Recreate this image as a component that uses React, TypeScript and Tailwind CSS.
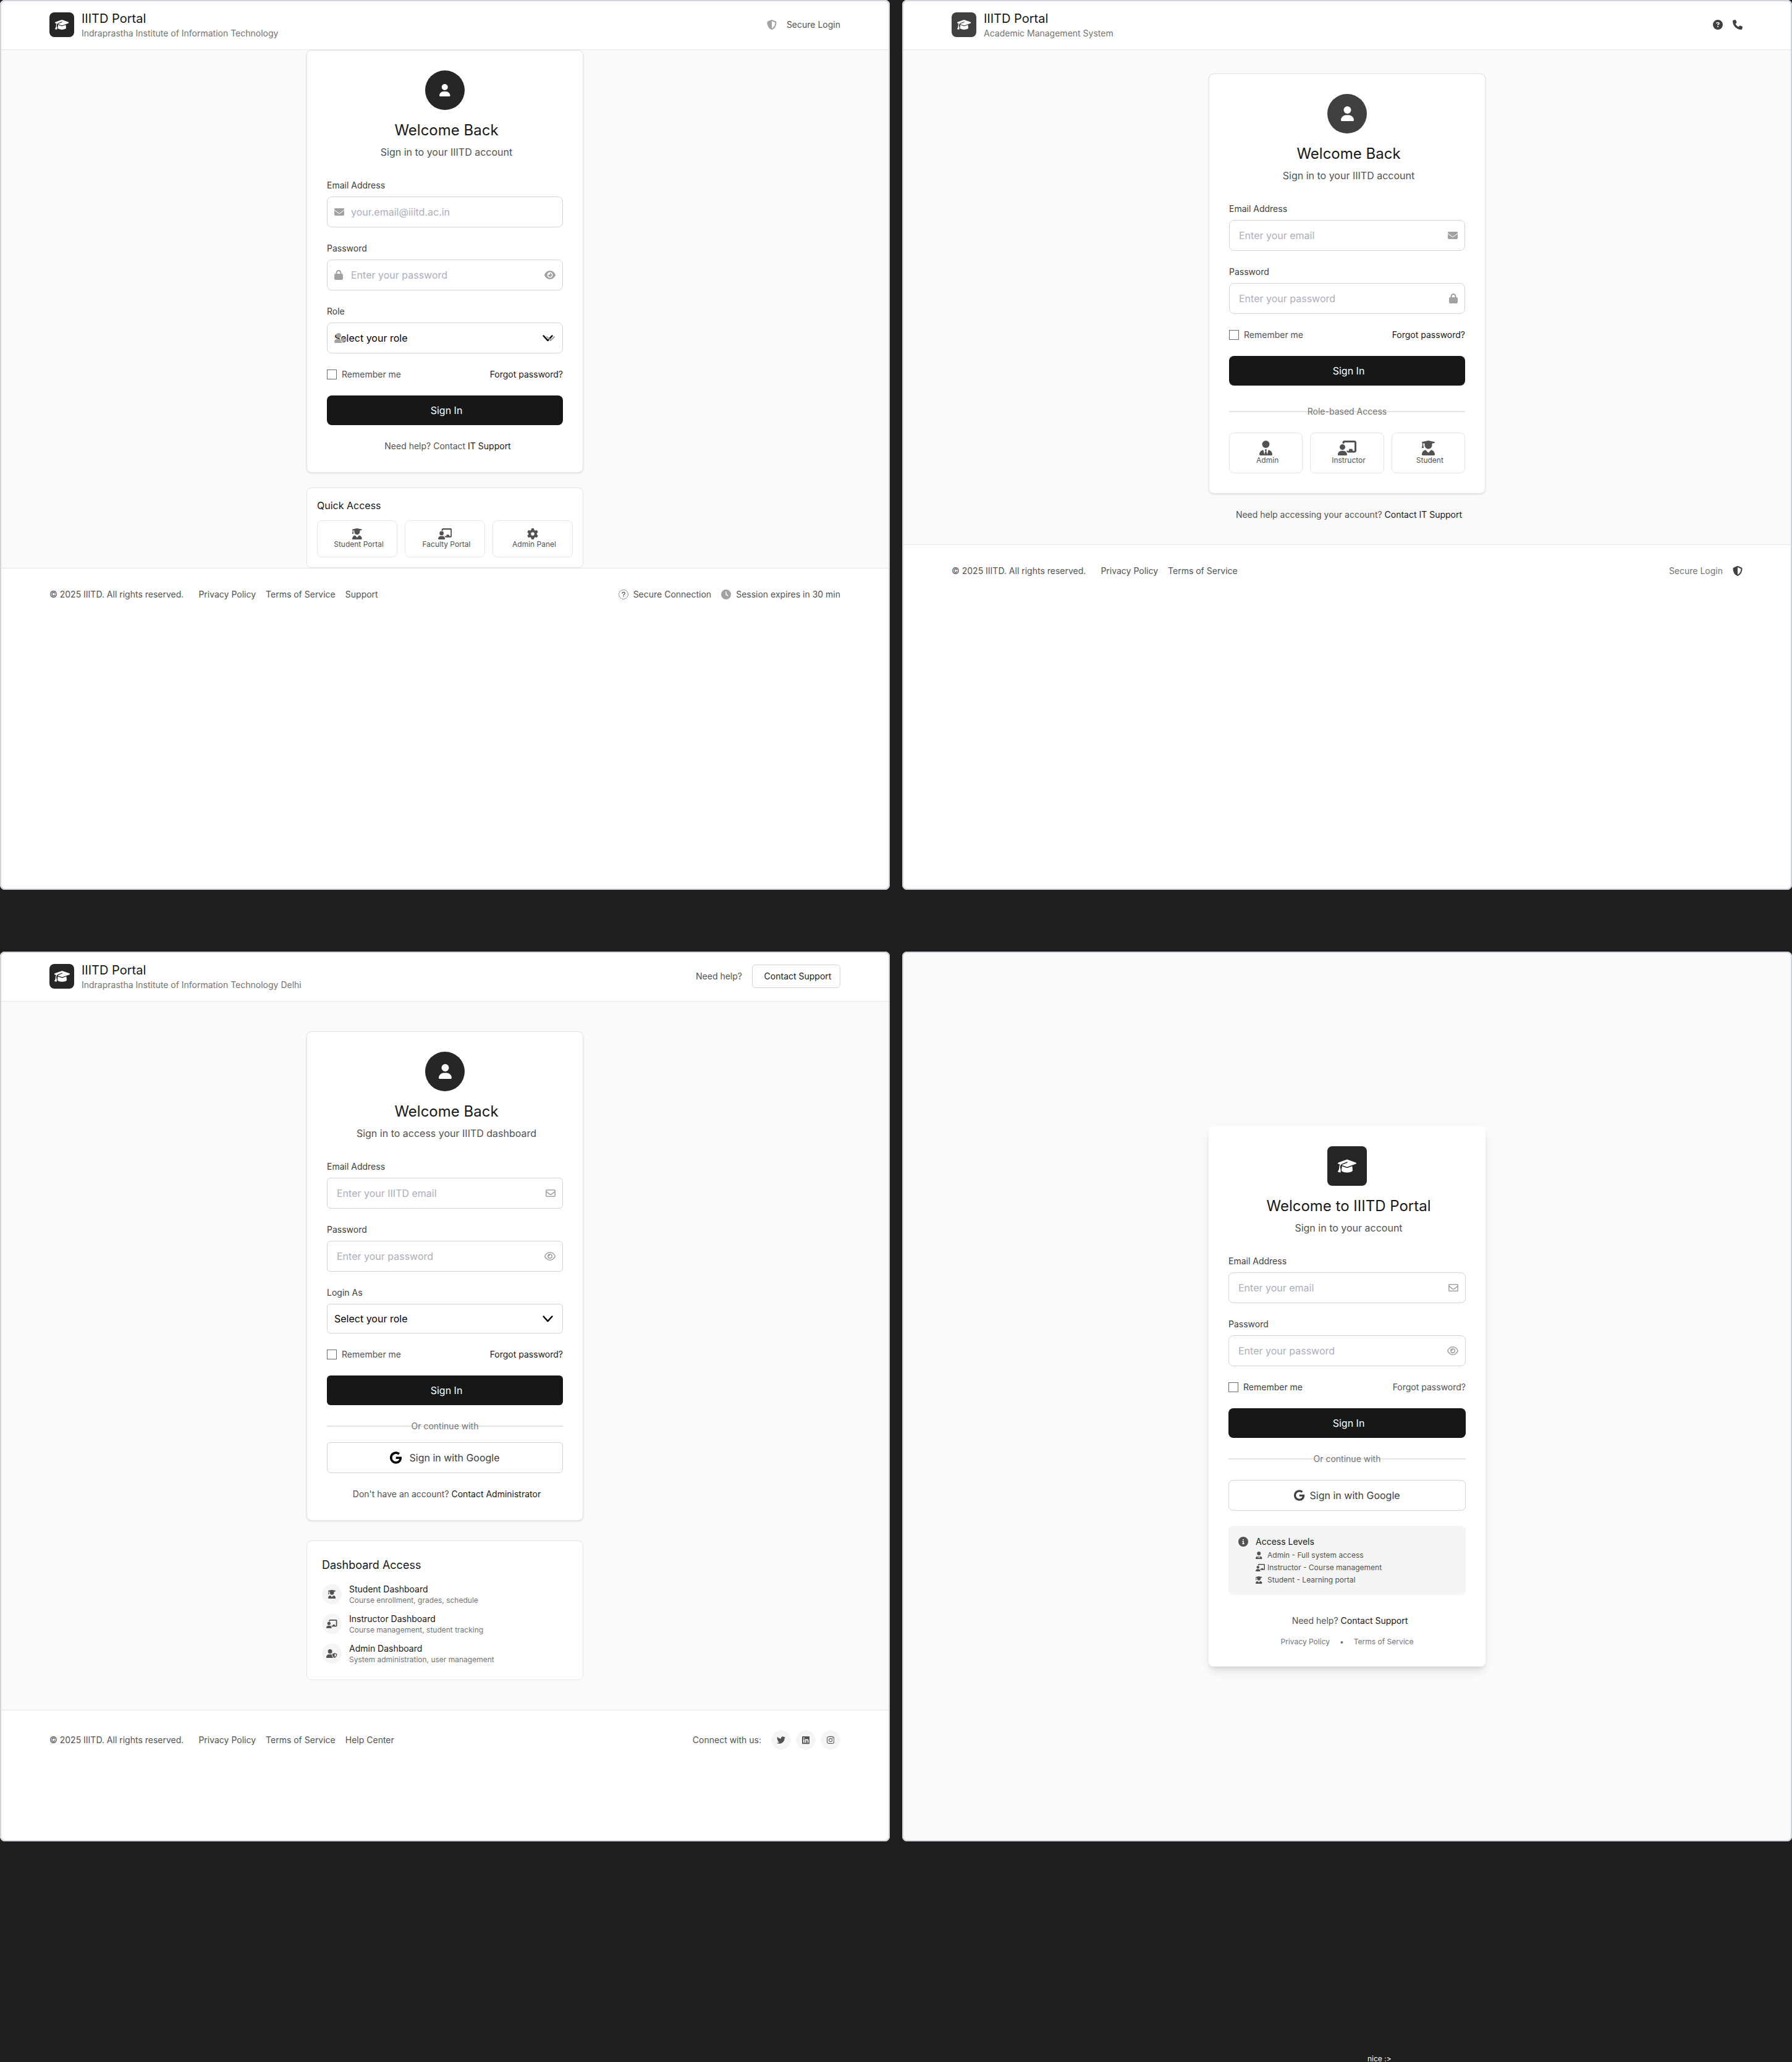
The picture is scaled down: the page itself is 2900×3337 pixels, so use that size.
import type { ReactNode } from "react";
import type { IconType } from "react-icons";
import {
  FaChalkboardUser,
  FaChevronDown,
  FaCircleInfo,
  FaCircleQuestion,
  FaClock,
  FaEnvelope,
  FaEye,
  FaGear,
  FaGoogle,
  FaGraduationCap,
  FaInstagram,
  FaLinkedin,
  FaLock,
  FaPhone,
  FaRegEnvelope,
  FaRegEye,
  FaShieldHalved,
  FaTwitter,
  FaUser,
  FaUserGraduate,
  FaUserShield,
  FaUserTie,
} from "react-icons/fa6";

// Each glyph keeps the proportions of its own drawing box; callers set only the height.
const glyphs = {
  board: [FaChalkboardUser, "aspect-[5/4]"],
  chevron: [FaChevronDown, "aspect-square"],
  clock: [FaClock, "aspect-square"],
  envelope: [FaEnvelope, "aspect-square"],
  envelopeOutline: [FaRegEnvelope, "aspect-square"],
  eye: [FaEye, "aspect-[9/8]"],
  eyeOutline: [FaRegEye, "aspect-[9/8]"],
  gear: [FaGear, "aspect-square"],
  google: [FaGoogle, "aspect-[61/64]"],
  cap: [FaGraduationCap, "aspect-[5/4]"],
  info: [FaCircleInfo, "aspect-square"],
  instagram: [FaInstagram, "aspect-[7/8]"],
  linkedin: [FaLinkedin, "aspect-[7/8]"],
  lock: [FaLock, "aspect-[7/8]"],
  phone: [FaPhone, "aspect-square"],
  question: [FaCircleQuestion, "aspect-square"],
  shield: [FaShieldHalved, "aspect-square"],
  twitter: [FaTwitter, "aspect-square"],
  user: [FaUser, "aspect-[7/8]"],
  graduate: [FaUserGraduate, "aspect-[7/8]"],
  userShield: [FaUserShield, "aspect-[5/4]"],
  tie: [FaUserTie, "aspect-[7/8]"],
} satisfies Record<string, [IconType, string]>;

type GlyphName = keyof typeof glyphs;

function Glyph({ name, className = "h-4" }: { name: GlyphName; className?: string }) {
  const [Icon, aspect] = glyphs[name];
  return <Icon className={`w-auto shrink-0 ${aspect} ${className}`} />;
}

function Frame({ tone, children }: { tone: string; children: ReactNode }) {
  return (
    <section
      className={`flex h-[1440px] w-[1440px] flex-col overflow-hidden rounded-lg outline-2 -outline-offset-2 outline-[#ced4da] ${tone}`}
    >
      {children}
    </section>
  );
}

function Header({
  subtitle,
  logoTone,
  iconSize,
  children,
}: {
  subtitle: string;
  logoTone: string;
  iconSize: string;
  children: ReactNode;
}) {
  return (
    <header className="flex h-[81px] shrink-0 items-center justify-between border-b border-neutral-200 bg-white px-20">
      <div className="flex items-center gap-3">
        <div className={`flex size-10 items-center justify-center rounded-lg text-white ${logoTone}`}>
          <Glyph name="cap" className={iconSize} />
        </div>
        <div>
          <div className="text-xl leading-7 text-neutral-900">IIITD Portal</div>
          <div className="text-sm leading-5 text-neutral-500">{subtitle}</div>
        </div>
      </div>
      {children}
    </header>
  );
}

function FooterLinks({ last }: { last?: string }) {
  return (
    <div className="flex items-center gap-6">
      <span>© 2025 IIITD. All rights reserved.</span>
      <div className="flex gap-4">
        <span>Privacy Policy</span>
        <span>Terms of Service</span>
        {last && <span>{last}</span>}
      </div>
    </div>
  );
}

function Footer({ last, children }: { last?: string; children: ReactNode }) {
  return (
    <footer className="flex shrink-0 items-center justify-between border-t border-neutral-200 bg-white px-20 py-8 text-sm leading-5 text-neutral-600">
      <FooterLinks last={last} />
      {children}
    </footer>
  );
}

function Intro({ title, subtitle, badge }: { title: string; subtitle: string; badge: ReactNode }) {
  return (
    <div className="flex flex-col items-center">
      {badge}
      <h1 className="mt-[17px] pl-[5px] text-2xl leading-8 text-neutral-900">{title}</h1>
      <p className="mt-[7px] pl-[5px] text-base leading-6 text-neutral-600">{subtitle}</p>
    </div>
  );
}

function Badge({ tone, children }: { tone: string; children: ReactNode }) {
  return <div className={`flex size-16 items-center justify-center text-white ${tone}`}>{children}</div>;
}

function Field({
  label,
  placeholder,
  left,
  right,
  radius = "rounded-lg",
}: {
  label: string;
  placeholder: string;
  left?: GlyphName;
  right?: GlyphName;
  radius?: string;
}) {
  return (
    <div>
      <div className="text-sm leading-5 text-neutral-700">{label}</div>
      <div
        className={`mt-2 flex h-[50px] items-center border border-neutral-300 bg-white px-[11px] text-neutral-400 ${radius}`}
      >
        {left && (
          <span className="flex w-[27px] shrink-0">
            <Glyph name={left} />
          </span>
        )}
        <span className={`flex-1 text-base leading-6 text-[#adaebc] ${left ? "" : "pl-1"}`}>{placeholder}</span>
        {right && <Glyph name={right} />}
      </div>
    </div>
  );
}

function SelectArrow() {
  return (
    <svg className="h-[11px] w-[17px] shrink-0" viewBox="0 0 17 11" fill="none">
      <path d="M1.6 1.5 8.5 9.1l6.9-7.6" stroke="#000" strokeWidth="2.4" strokeLinecap="round" strokeLinejoin="round" />
    </svg>
  );
}

function DashedQuestion() {
  return (
    <svg className="size-4 shrink-0" viewBox="0 0 16 16" fill="none" stroke="currentColor">
      <circle cx="8" cy="8" r="7.4" strokeWidth="0.9" strokeDasharray="2 0.906" />
      <path d="M5.8 6.1c.1-1.2.9-1.8 2.2-1.8 1.4 0 2.3.7 2.3 1.9 0 1.6-2.3 1.6-2.3 3.3" strokeWidth="1.2" strokeLinecap="round" />
      <circle cx="8" cy="11.6" r="0.75" fill="currentColor" stroke="none" />
    </svg>
  );
}

function RememberRow({ textTone, linkTone }: { textTone: string; linkTone: string }) {
  return (
    <div className="flex h-5 items-center justify-between text-sm leading-5">
      <div className="flex items-center gap-2">
        <span className="size-4 border border-[#6b6b6b] bg-white" />
        <span className={textTone}>Remember me</span>
      </div>
      <span className={linkTone}>Forgot password?</span>
    </div>
  );
}

function SignIn({ radius = "rounded-lg" }: { radius?: string }) {
  return (
    <div
      className={`flex h-12 items-center justify-center bg-neutral-900 pl-[5px] text-base leading-6 text-white ${radius}`}
    >
      Sign In
    </div>
  );
}

function Divider({ label }: { label: string }) {
  return (
    <div className="grid h-5 items-center">
      <span className="col-start-1 row-start-1 h-0.5 bg-neutral-200" />
      <span className="col-start-1 row-start-1 text-center text-sm leading-5 text-neutral-500">{label}</span>
    </div>
  );
}

function Tile({ icon, iconSize, label }: { icon: GlyphName; iconSize: string; label: string }) {
  return (
    <div className="flex flex-col items-center rounded-lg border border-neutral-200 py-3 text-neutral-600">
      <Glyph name={icon} className={iconSize} />
      <span className="pl-[5px] text-xs leading-4">{label}</span>
    </div>
  );
}

function DashboardRow({ icon, title, text }: { icon: GlyphName; title: string; text: string }) {
  return (
    <div className="flex items-center gap-3">
      <div className="flex size-8 items-center justify-center rounded-full bg-neutral-100 text-neutral-600">
        <Glyph name={icon} className="h-3.5" />
      </div>
      <div>
        <div className="text-sm leading-5 text-neutral-900">{title}</div>
        <div className="text-xs leading-4 text-neutral-500">{text}</div>
      </div>
    </div>
  );
}

function AccessRow({ icon, text }: { icon: GlyphName; text: string }) {
  return (
    <div className="flex items-center gap-1">
      <span className="flex w-[15px]">
        <Glyph name={icon} className="h-3" />
      </span>
      <span>{text}</span>
    </div>
  );
}

const card = "w-[448px] border border-neutral-200 bg-white";

function InstituteLogin() {
  return (
    <Frame tone="bg-white">
      <Header subtitle="Indraprastha Institute of Information Technology" logoTone="bg-neutral-800" iconSize="h-[18px]">
        <div className="flex items-center gap-4 text-sm leading-5 text-neutral-600">
          <span className="text-neutral-400">
            <Glyph name="shield" />
          </span>
          <span>Secure Login</span>
        </div>
      </Header>
      <main className="flex flex-col items-center gap-6 bg-neutral-50">
        <div className={`${card} rounded-lg p-8 shadow-sm`}>
          <Intro
            title="Welcome Back"
            subtitle="Sign in to your IIITD account"
            badge={
              <Badge tone="rounded-full bg-neutral-800">
                <Glyph name="user" className="h-5" />
              </Badge>
            }
          />
          <div className="mt-8 flex flex-col gap-6">
            <Field label="Email Address" placeholder="your.email@iiitd.ac.in" left="envelope" />
            <Field label="Password" placeholder="Enter your password" left="lock" right="eye" />
            <div>
              <div className="text-sm leading-5 text-neutral-700">Role</div>
              <div className="relative mt-2 flex h-[50px] items-center justify-between rounded-lg border border-neutral-300 pr-[15px] pl-[11px] text-base leading-6 text-black">
                <span>Select your role</span>
                <SelectArrow />
                <span className="absolute top-4 left-[11px] text-neutral-400">
                  <Glyph name="userShield" />
                </span>
                <span className="absolute top-4 right-[11px] text-neutral-400">
                  <Glyph name="chevron" />
                </span>
              </div>
            </div>
            <RememberRow textTone="text-neutral-600" linkTone="text-neutral-900" />
            <SignIn />
            <div className="pl-[9px] text-center text-sm leading-5 text-neutral-600">
              Need help? Contact <span className="text-neutral-900">IT Support</span>
            </div>
          </div>
        </div>
        <div className={`${card} rounded-lg p-4`}>
          <div className="text-base leading-6 text-neutral-900">Quick Access</div>
          <div className="mt-3 grid grid-cols-3 gap-3">
            <Tile icon="graduate" iconSize="h-[18px]" label="Student Portal" />
            <Tile icon="board" iconSize="h-[18px]" label="Faculty Portal" />
            <Tile icon="gear" iconSize="h-[18px]" label="Admin Panel" />
          </div>
        </div>
      </main>
      <Footer last="Support">
        <div className="flex gap-4">
          <div className="flex items-center gap-2">
            <DashedQuestion />
            <span>Secure Connection</span>
          </div>
          <div className="flex items-center gap-2">
            <span className="text-neutral-400">
              <Glyph name="clock" />
            </span>
            <span>Session expires in 30 min</span>
          </div>
        </div>
      </Footer>
    </Frame>
  );
}

function RoleLogin() {
  return (
    <Frame tone="bg-white">
      <Header subtitle="Academic Management System" logoTone="bg-neutral-700" iconSize="h-[18px]">
        <div className="flex gap-4 text-neutral-700">
          <Glyph name="question" />
          <Glyph name="phone" />
        </div>
      </Header>
      <main className="flex flex-col items-center bg-neutral-50 py-[38px]">
        <div className={`${card} rounded-lg p-8 shadow-sm`}>
          <Intro
            title="Welcome Back"
            subtitle="Sign in to your IIITD account"
            badge={
              <Badge tone="rounded-full bg-neutral-700">
                <Glyph name="user" className="h-6" />
              </Badge>
            }
          />
          <div className="mt-8 flex flex-col gap-6">
            <Field label="Email Address" placeholder="Enter your email" right="envelope" />
            <Field label="Password" placeholder="Enter your password" right="lock" />
            <RememberRow textTone="text-neutral-600" linkTone="text-neutral-900" />
            <SignIn />
          </div>
          <div className="mt-8">
            <Divider label="Role-based Access" />
          </div>
          <div className="mt-6 grid grid-cols-3 gap-3">
            <Tile icon="tie" iconSize="h-6" label="Admin" />
            <Tile icon="board" iconSize="h-6" label="Instructor" />
            <Tile icon="graduate" iconSize="h-6" label="Student" />
          </div>
        </div>
        <div className="mt-6 pl-[6px] text-sm leading-5 text-neutral-600">
          Need help accessing your account? <span className="text-neutral-900">Contact IT Support</span>
        </div>
      </main>
      <Footer>
        <div className="flex items-center gap-4">
          <span className="text-neutral-500">Secure Login</span>
          <span className="text-neutral-700">
            <Glyph name="shield" />
          </span>
        </div>
      </Footer>
    </Frame>
  );
}

function DashboardLogin() {
  return (
    <Frame tone="bg-white">
      <Header
        subtitle="Indraprastha Institute of Information Technology Delhi"
        logoTone="bg-neutral-800"
        iconSize="h-5"
      >
        <div className="flex items-center gap-4 text-sm leading-5">
          <span className="text-neutral-600">Need help?</span>
          <span className="w-[143px] rounded-md border border-neutral-300 py-2 pl-[5px] text-center text-neutral-900">
            Contact Support
          </span>
        </div>
      </Header>
      <main className="flex flex-col items-center gap-8 bg-neutral-50 py-12">
        <div className={`${card} rounded-lg p-8 shadow-sm`}>
          <Intro
            title="Welcome Back"
            subtitle="Sign in to access your IIITD dashboard"
            badge={
              <Badge tone="rounded-full bg-neutral-800">
                <Glyph name="user" className="h-6" />
              </Badge>
            }
          />
          <div className="mt-8 flex flex-col gap-6">
            <Field label="Email Address" placeholder="Enter your IIITD email" right="envelopeOutline" radius="rounded-md" />
            <Field label="Password" placeholder="Enter your password" right="eyeOutline" radius="rounded-md" />
            <div>
              <div className="text-sm leading-5 text-neutral-700">Login As</div>
              <div className="mt-2 flex h-12 items-center justify-between rounded-md border border-neutral-300 pr-[15px] pl-[11px] text-base leading-6 text-black">
                <span>Select your role</span>
                <SelectArrow />
              </div>
            </div>
            <RememberRow textTone="text-neutral-600" linkTone="text-neutral-900" />
            <SignIn radius="rounded-md" />
            <Divider label="Or continue with" />
          </div>
          <div className="mt-4 flex h-[50px] items-center justify-center gap-3 rounded-md border border-neutral-300 text-base leading-6 text-neutral-700">
            <span className="text-black">
              <Glyph name="google" className="h-5" />
            </span>
            <span>Sign in with Google</span>
          </div>
          <div className="mt-6 pl-[6px] text-center text-sm leading-5 text-neutral-600">
            Don't have an account? <span className="text-neutral-900">Contact Administrator</span>
          </div>
        </div>
        <div className={`${card} rounded-lg p-6`}>
          <div className="pt-px text-lg leading-7 text-neutral-900">Dashboard Access</div>
          <div className="mt-[15px] flex flex-col gap-3">
            <DashboardRow icon="graduate" title="Student Dashboard" text="Course enrollment, grades, schedule" />
            <DashboardRow icon="board" title="Instructor Dashboard" text="Course management, student tracking" />
            <DashboardRow icon="userShield" title="Admin Dashboard" text="System administration, user management" />
          </div>
        </div>
      </main>
      <Footer last="Help Center">
        <div className="flex items-center gap-4">
          <span>Connect with us:</span>
          <div className="flex gap-2">
            {(["twitter", "linkedin", "instagram"] as const).map((name) => (
              <span key={name} className="flex size-8 items-center justify-center rounded-full bg-neutral-100">
                <Glyph name={name} className="h-3.5" />
              </span>
            ))}
          </div>
        </div>
      </Footer>
    </Frame>
  );
}

function PortalLogin() {
  return (
    <Frame tone="items-center justify-center bg-neutral-50">
      <div className="w-[448px] rounded-lg bg-white p-8 shadow-[0_10px_15px_-3px_rgba(0,0,0,0.1),0_4px_6px_-2px_rgba(0,0,0,0.1)]">
        <Intro
          title="Welcome to IIITD Portal"
          subtitle="Sign in to your account"
          badge={
            <Badge tone="rounded-lg bg-neutral-800">
              <Glyph name="cap" className="h-6" />
            </Badge>
          }
        />
        <div className="mt-8 flex flex-col gap-6">
          <Field label="Email Address" placeholder="Enter your email" right="envelopeOutline" />
          <Field label="Password" placeholder="Enter your password" right="eyeOutline" />
          <RememberRow textTone="text-neutral-700" linkTone="text-neutral-600" />
          <SignIn />
          <Divider label="Or continue with" />
          <div className="flex h-[50px] items-center justify-center gap-2 rounded-lg border border-neutral-300 text-base leading-6 text-neutral-700">
            <Glyph name="google" className="h-[18px]" />
            <span>Sign in with Google</span>
          </div>
          <div className="flex gap-3 rounded-lg bg-neutral-100 p-4">
            <span className="mt-0.5 text-neutral-600">
              <Glyph name="info" />
            </span>
            <div>
              <div className="text-sm leading-5 text-neutral-900">Access Levels</div>
              <div className="mt-1 flex flex-col gap-1 text-xs leading-4 text-neutral-600">
                <AccessRow icon="tie" text="Admin - Full system access" />
                <AccessRow icon="board" text="Instructor - Course management" />
                <AccessRow icon="graduate" text="Student - Learning portal" />
              </div>
            </div>
          </div>
        </div>
        <div className="mt-8 pl-[9px] text-center text-sm leading-5 text-neutral-600">
          Need help? <span className="text-neutral-900">Contact Support</span>
        </div>
        <div className="mt-4 flex justify-center gap-4 text-xs leading-4 text-neutral-500">
          <span>Privacy Policy</span>
          <span>•</span>
          <span>Terms of Service</span>
        </div>
      </div>
    </Frame>
  );
}

export default function App() {
  return (
    <div className="h-[3337px] w-[2900px] overflow-hidden bg-[#1e1e1e] font-['Inter',sans-serif]">
      <div className="grid grid-cols-[1440px_1440px] gap-x-5 gap-y-[100px]">
        <InstituteLogin />
        <RoleLogin />
        <DashboardLogin />
        <PortalLogin />
      </div>
      <div className="mt-[344px] pl-[2213px] text-xs leading-4 text-white">nice :&gt;</div>
    </div>
  );
}
